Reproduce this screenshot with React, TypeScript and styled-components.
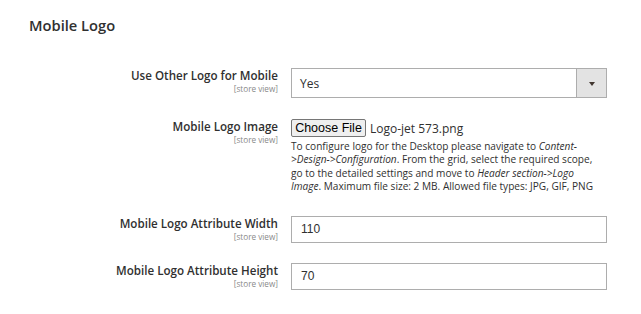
import React from 'react';
import styled, {createGlobalStyle} from 'styled-components';

const GlobalStyle = createGlobalStyle`
    body {
        margin: 0;
        background: #fff;
        font-family: "Open Sans", sans-serif;
        color: #303030;
    }
`;

const StyledPage = styled.div`
    width: 641px;
    height: 314px;
    box-sizing: border-box;
    padding: 15px 0 0 29px;
`;

const StyledTitle = styled.h2`
    margin: 0 0 33px;
    font-size: 14.7px;
    line-height: 20px;
    font-weight: 600;
    color: #303030;
`;

const StyledRow = styled.div<{gap: number}>`
    display: grid;
    grid-template-columns: 249px 316px;
    column-gap: 13px;
    margin-bottom: ${({gap}) => gap}px;
`;

const StyledLabel = styled.div`
    text-align: right;
    font-size: 11.6px;
    line-height: 15px;
    font-weight: 600;
    color: #303030;
`;

const StyledScope = styled.div`
    font-size: 8.2px;
    line-height: 11px;
    font-weight: 400;
    color: #8a8a8a;
`;

const StyledSelect = styled.div`
    display: flex;
    height: 30px;
    box-sizing: border-box;
    border: 1px solid #adadad;
    font-size: 12px;
`;

const StyledSelectValue = styled.div`
    flex: 1;
    display: flex;
    align-items: center;
    padding-left: 8px;
    color: #303030;
`;

const StyledSelectArrow = styled.div`
    width: 29px;
    display: flex;
    align-items: center;
    justify-content: center;
    background: #e3e3e3;
    border-left: 1px solid #adadad;

    &::after {
        content: '';
        border-left: 3.5px solid transparent;
        border-right: 3.5px solid transparent;
        border-top: 4px solid #41362f;
        margin-top: 1px;
    }
`;

const StyledFileLine = styled.div`
    display: flex;
    align-items: center;
    gap: 4px;
    height: 18px;
`;

const StyledFileButton = styled.button`
    height: 18px;
    width: 75px;
    padding: 0;
    box-sizing: border-box;
    border: 1px solid #767676;
    border-radius: 2px;
    background: #efefef;
    font-family: "Liberation Sans", Arial, sans-serif;
    font-size: 12.5px;
    line-height: 16px;
    color: #000;
`;

const StyledFileName = styled.span`
    font-size: 12px;
    color: #303030;
`;

const StyledNote = styled.div`
    margin-top: 3px;
    padding-right: 12px;
    font-size: 10.1px;
    line-height: 13.4px;
    color: #303030;

    em {
        font-style: italic;
    }
`;

const StyledInput = styled.div`
    height: 27px;
    box-sizing: border-box;
    border: 1px solid #adadad;
    padding-left: 9px;
    display: flex;
    align-items: center;
    font-family: "Liberation Sans", Arial, sans-serif;
    font-size: 12px;
    color: #303030;
`;

const Label: React.FC<{text: string}> = ({text}) => (
    <StyledLabel>
        {text}
        <StyledScope>[store view]</StyledScope>
    </StyledLabel>
);

const App: React.FC = () => {
    return (
        <StyledPage>
            <GlobalStyle/>
            <StyledTitle>Mobile Logo</StyledTitle>
            <StyledRow gap={21}>
                <Label text="Use Other Logo for Mobile"/>
                <StyledSelect>
                    <StyledSelectValue>Yes</StyledSelectValue>
                    <StyledSelectArrow/>
                </StyledSelect>
            </StyledRow>
            <StyledRow gap={22}>
                <Label text="Mobile Logo Image"/>
                <div>
                    <StyledFileLine>
                        <StyledFileButton>Choose File</StyledFileButton>
                        <StyledFileName>Logo-jet 573.png</StyledFileName>
                    </StyledFileLine>
                    <StyledNote>
                        To configure logo for the Desktop please navigate to <em>Content-&gt;Design-&gt;Configuration</em>. From the grid, select the required scope, go to the detailed settings and move to <em>Header section-&gt;Logo Image</em>. Maximum file size: 2 MB. Allowed file types: JPG, GIF, PNG
                    </StyledNote>
                </div>
            </StyledRow>
            <StyledRow gap={20}>
                <Label text="Mobile Logo Attribute Width"/>
                <StyledInput>110</StyledInput>
            </StyledRow>
            <StyledRow gap={0}>
                <Label text="Mobile Logo Attribute Height"/>
                <StyledInput>70</StyledInput>
            </StyledRow>
        </StyledPage>
    );
};

export default App;
